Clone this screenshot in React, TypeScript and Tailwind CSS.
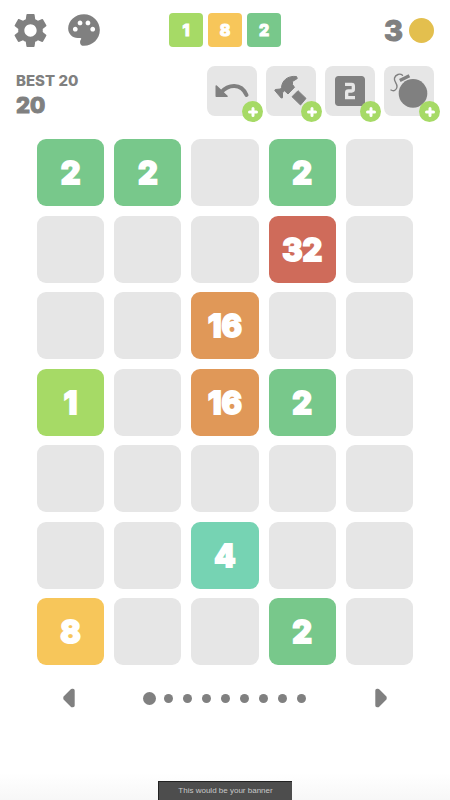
import React from "react";
import { MdLooksTwo, MdPalette, MdSettings } from "react-icons/md";

const tileColors: Record<number, string> = {
  1: "bg-[#a6da66]",
  2: "bg-[#78c88b]",
  4: "bg-[#76d3b3]",
  8: "bg-[#f7c65a]",
  16: "bg-[#e09858]",
  32: "bg-[#cf6b5a]",
};

const nextTiles = [1, 8, 2];

// 0 is an empty cell
const board = [
  [2, 2, 0, 2, 0],
  [0, 0, 0, 32, 0],
  [0, 0, 16, 0, 0],
  [1, 0, 16, 2, 0],
  [0, 0, 0, 0, 0],
  [0, 0, 4, 0, 0],
  [8, 0, 0, 2, 0],
];

const UndoIcon = () => (
  <svg viewBox="0 0 50 50" className="h-full w-full" aria-hidden="true">
    <path
      d="M14 26.5C21 18.5 34 16.5 39.5 29"
      fill="none"
      stroke="currentColor"
      strokeWidth="4"
      strokeLinecap="round"
    />
    <path
      d="M9.3 20L20 30.3H9.3Z"
      fill="currentColor"
      stroke="currentColor"
      strokeWidth="1.6"
      strokeLinejoin="round"
    />
  </svg>
);

const HammerIcon = () => (
  <svg
    viewBox="0 0 50 50"
    className="h-full w-full"
    fill="currentColor"
    stroke="currentColor"
    strokeWidth="1"
    strokeLinejoin="round"
    aria-hidden="true"
  >
    <path d="M15.5 21.5C16 15 21 9.5 30.5 10.5L31.3 12.5L26.5 15.5V18.5L28.5 21.3L22 28L18.5 24.7L16.5 26.8V31.8L15.2 32L8.8 24.5L9.3 23.5L14.5 23Z" />
    <path d="M26 30.7L32 24.7L40 32.4L34.5 39Z" />
  </svg>
);

const BombIcon = () => (
  <svg
    viewBox="0 0 50 50"
    className="h-full w-full"
    fill="none"
    stroke="currentColor"
    aria-hidden="true"
  >
    <circle cx="29" cy="27.4" r="14.3" fill="currentColor" stroke="none" />
    <path d="M15.8 14.6L25.4 9.8" strokeWidth="3.4" />
    <path
      d="M18.5 9.3C16 7 11.5 8.5 10.5 12C9.5 15.5 13.5 17.5 13 21C12.5 24.5 9.5 25.5 7 24"
      strokeWidth="1.4"
      strokeLinecap="round"
    />
  </svg>
);

const tools = [
  { name: "Undo", icon: <UndoIcon /> },
  { name: "Hammer", icon: <HammerIcon /> },
  { name: "Number two", icon: <MdLooksTwo className="h-10 w-10" /> },
  { name: "Bomb", icon: <BombIcon /> },
];

const Arrow = ({ className = "" }: { className?: string }) => (
  <svg viewBox="0 0 12 20" className={`h-5 w-3 ${className}`} aria-hidden="true">
    <path
      d="M10 2.5L9 2.5L2 9.5V10.5L9 17.5H10Z"
      fill="currentColor"
      stroke="currentColor"
      strokeWidth="3.4"
      strokeLinejoin="round"
    />
  </svg>
);

const App = () => {
  return (
    <div className="flex min-h-screen flex-col bg-white font-[Inter,sans-serif] font-extrabold text-[#808080]">
      {/* top bar */}
      <header className="grid grid-cols-[1fr_auto_1fr] items-center px-4 pt-[13px]">
        <div className="-ml-1.5 flex items-center gap-3.5">
          <button aria-label="Settings">
            <MdSettings className="-my-1 h-[41px] w-[41px]" />
          </button>
          <button aria-label="Themes">
            <MdPalette className="-my-1 h-[38px] w-[38px] -scale-x-100" />
          </button>
        </div>
        <ul className="flex gap-[5px]">
          {nextTiles.map((value, i) => (
            <li
              key={i}
              className={`flex h-[34px] w-[34px] items-center justify-center rounded-sm text-base leading-none text-white [-webkit-text-stroke:1px_white] ${tileColors[value]}`}
            >
              {value}
            </li>
          ))}
        </ul>
        <div className="flex items-center justify-end gap-1.5">
          <span className="text-[29px] leading-none [-webkit-text-stroke:1px_#808080]">3</span>
          <span className="h-[25px] w-[25px] rounded-full bg-[#e3bf4e]" />
        </div>
      </header>

      {/* score and tools */}
      <section className="flex items-start justify-between px-4 pt-[19px]">
        <div className="pt-[5px]">
          <p className="text-[15px] leading-5">BEST 20</p>
          <p className="text-[22px] leading-7 [-webkit-text-stroke:1px_#808080]">20</p>
        </div>
        <div className="flex gap-[9px]">
          {tools.map((tool) => (
            <button
              key={tool.name}
              aria-label={tool.name}
              className="relative flex h-[50px] w-[50px] items-center justify-center rounded-lg bg-[#e6e6e6]"
            >
              {tool.icon}
              <span className="absolute -right-1.5 -bottom-1.5 flex h-[21px] w-[21px] items-center justify-center rounded-full bg-[#a6da66]">
                <svg viewBox="0 0 10 10" className="h-2.5 w-2.5" aria-hidden="true">
                  <path
                    d="M5 1.5V8.5M1.5 5H8.5"
                    stroke="white"
                    strokeWidth="3"
                    strokeLinecap="round"
                  />
                </svg>
              </span>
            </button>
          ))}
        </div>
      </section>

      {/* board */}
      <main className="mx-[37px] mt-5 grid aspect-[375/525] grid-cols-5 content-between gap-x-2.5">
        {board.flat().map((value, i) => (
          <div
            key={i}
            className={`flex aspect-square items-center justify-center rounded-[9px] text-[31px] leading-none text-white [-webkit-text-stroke:2px_white] ${
              value ? tileColors[value] : "bg-[#e6e6e6]"
            }`}
          >
            {value || ""}
          </div>
        ))}
      </main>

      {/* pages */}
      <nav className="mx-[63px] mt-[23px] flex items-center justify-between">
        <button aria-label="Previous">
          <Arrow />
        </button>
        <div className="mr-0.5 flex items-center gap-2.5">
          <span className="-mr-0.5 h-[13px] w-[13px] rounded-full bg-[#808080]" />
          {Array.from({ length: 8 }).map((_, i) => (
            <span key={i} className="h-[9px] w-[9px] rounded-full bg-[#808080]" />
          ))}
        </div>
        <button aria-label="Next">
          <Arrow className="-scale-x-100" />
        </button>
      </nav>

      {/* banner */}
      <footer className="mt-auto flex justify-center bg-linear-to-b from-white to-[#f7f7f7] pt-2">
        <p className="border-t border-l border-[#222] bg-[#4d4d4d] px-[19px] font-['Liberation_Sans',Arial,sans-serif] text-[8px] leading-[18px] font-normal text-[#c8c8c8]">
          This would be your banner
        </p>
      </footer>
    </div>
  );
};

export default App;
